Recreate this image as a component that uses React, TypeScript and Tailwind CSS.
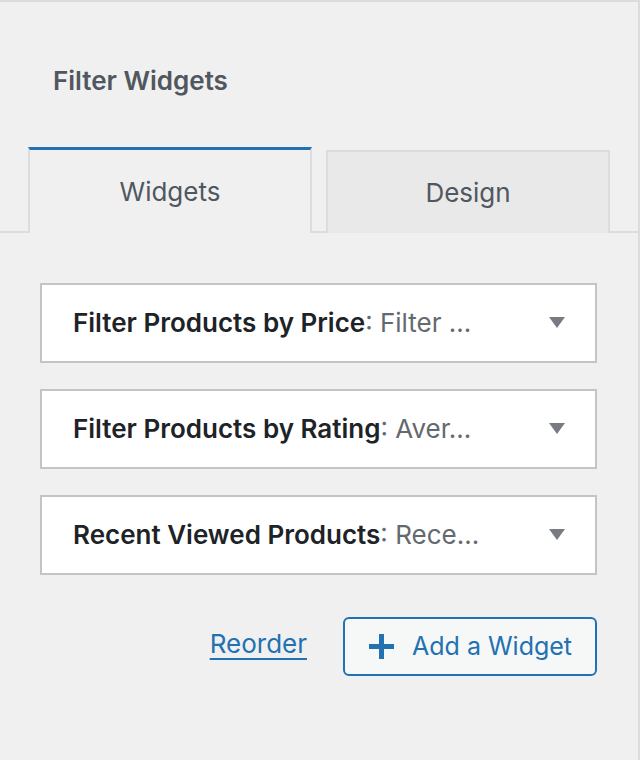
import React from "react";

const widgets = [
  { name: "Filter Products by Price", title: "Filter ..." },
  { name: "Filter Products by Rating", title: "Aver..." },
  { name: "Recent Viewed Products", title: "Rece..." },
];

export default function App() {
  return (
    <div
      className="w-[640px] h-[760px] bg-[#f0f0f1] border-t-2 border-r-2 border-[#dcdcde] overflow-hidden"
      style={{ fontFamily: "Inter, 'Noto Sans', sans-serif" }}
    >
      <div className="h-[145px] pl-[53px] pt-[62px]">
        <h1 className="text-[26px] leading-[34px] font-semibold text-[#50575e]">Filter Widgets</h1>
      </div>

      {/* tabs */}
      <div className="flex items-end h-[86px] border-b-2 border-[#dcdcde]">
        <div className="w-[28px]" />
        <div className="w-[284px] h-[86px] -mb-[2px] border-t-[3px] border-t-[#2271b1] border-x-2 border-x-[#dcdcde] bg-[#f0f0f1] flex items-center justify-center text-[26px] text-[#50575e]">
          Widgets
        </div>
        <div className="w-[14px]" />
        <div className="w-[284px] h-[83px] -mb-[2px] border-2 border-b-0 border-[#dcdcde] bg-[#e9e9ea] flex items-center justify-center text-[26px] text-[#50575e]">
          Design
        </div>
      </div>

      <div className="px-[40px] pt-[50px] pr-[41px] flex flex-col gap-[26px]">
        {widgets.map((w) => (
          <div
            key={w.name}
            className="h-[80px] bg-white border-2 border-[#c3c4c7] flex items-center pl-[31px] pr-[30px]"
          >
            <div className="flex-1 text-[26px] leading-[32px] whitespace-nowrap">
              <span className="font-semibold text-[#1d2327]">{w.name}</span>
              <span className="text-[#646970]">: {w.title}</span>
            </div>
            <svg width="16" height="12" viewBox="0 0 16 12" className="shrink-0">
              <path d="M0 0 H16 L8 11 Z" fill="#787c82" />
            </svg>
          </div>
        ))}

        <div className="flex items-center justify-end gap-[36px] mt-[16px]">
          <a href="#" className="text-[26px] text-[#2271b1] underline underline-offset-[5px] -mt-[6px]">
            Reorder
          </a>
          <button className="h-[59px] w-[254px] border-2 border-[#2271b1] rounded-[6px] bg-[#f6f7f7] flex items-center pl-[24px] gap-[18px] text-[25px] text-[#2271b1]">
            <svg width="25" height="25" viewBox="0 0 25 25">
              <path d="M10 0 H15 V10 H25 V15 H15 V25 H10 V15 H0 V10 H10 Z" fill="#2271b1" />
            </svg>
            Add a Widget
          </button>
        </div>
      </div>
    </div>
  );
}
